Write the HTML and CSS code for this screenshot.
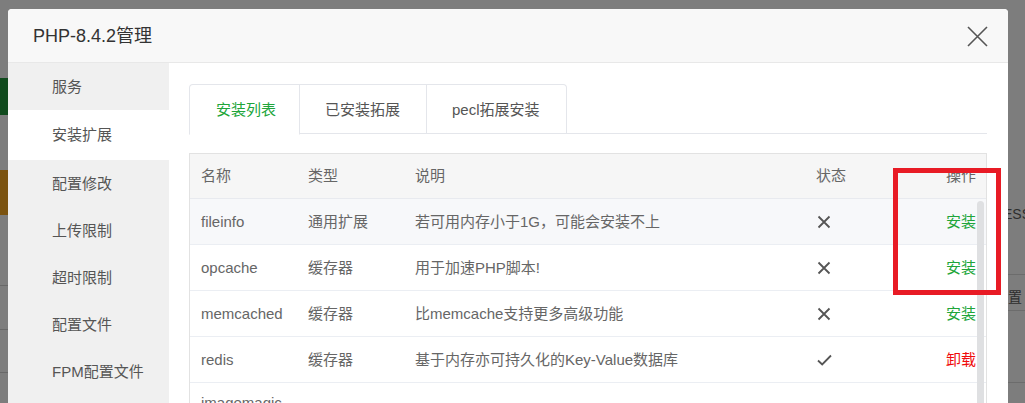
FILE: index.html
```html
<!DOCTYPE html>
<html lang="zh-CN">
<head>
<meta charset="utf-8">
<title>PHP-8.4.2管理</title>
<link rel="stylesheet" href="styles.css">
</head>
<body>
<div class="backdrop">
  <div class="bg-green"></div>
  <div class="bg-brown"></div>
  <div class="bg-line l1"></div>
  <div class="bg-line l2"></div>
  <div class="bg-line l3"></div>
  <div class="bg-rline r1"></div>
  <div class="bg-rline r2"></div>
  <div class="bg-rline r3"></div>
  <div class="bg-text t1">ESS</div>
  <div class="bg-text t2">置</div>
</div>
<div class="modal">
  <div class="modal-header">
    <span class="modal-title">PHP-8.4.2管理</span>
    <span class="modal-close">
      <svg width="21" height="21" viewBox="0 0 21 21"><path d="M1 1 L20 20 M20 1 L1 20" stroke="#555" stroke-width="1.6" fill="none"/></svg>
    </span>
  </div>
  <div class="modal-body">
    <ul class="side">
      <li>服务</li>
      <li class="active">安装扩展</li>
      <li>配置修改</li>
      <li>上传限制</li>
      <li>超时限制</li>
      <li>配置文件</li>
      <li>FPM配置文件</li>
    </ul>
    <div class="content">
      <div class="tabs">
        <div class="tab active">安装列表</div>
        <div class="tab">已安装拓展</div>
        <div class="tab">pecl拓展安装</div>
      </div>
      <div class="table">
        <div class="row head">
          <div class="cell">名称</div>
          <div class="cell">类型</div>
          <div class="cell">说明</div>
          <div class="cell">状态</div>
          <div class="cell op">操作</div>
        </div>
        <div class="tbody">
          <div class="row hover">
            <div class="cell name">fileinfo</div>
            <div class="cell">通用扩展</div>
            <div class="cell">若可用内存小于1G，可能会安装不上</div>
            <div class="cell"><svg class="st" width="14" height="14" viewBox="0 0 14 14"><path d="M1.5 1.5 L12.5 12.5 M12.5 1.5 L1.5 12.5" stroke="#555" stroke-width="1.8"/></svg></div>
            <div class="cell op"><span class="install">安装</span></div>
          </div>
          <div class="row">
            <div class="cell name">opcache</div>
            <div class="cell">缓存器</div>
            <div class="cell">用于加速PHP脚本!</div>
            <div class="cell"><svg class="st" width="14" height="14" viewBox="0 0 14 14"><path d="M1.5 1.5 L12.5 12.5 M12.5 1.5 L1.5 12.5" stroke="#555" stroke-width="1.8"/></svg></div>
            <div class="cell op"><span class="install">安装</span></div>
          </div>
          <div class="row">
            <div class="cell name">memcached</div>
            <div class="cell">缓存器</div>
            <div class="cell">比memcache支持更多高级功能</div>
            <div class="cell"><svg class="st" width="14" height="14" viewBox="0 0 14 14"><path d="M1.5 1.5 L12.5 12.5 M12.5 1.5 L1.5 12.5" stroke="#555" stroke-width="1.8"/></svg></div>
            <div class="cell op"><span class="install">安装</span></div>
          </div>
          <div class="row">
            <div class="cell name">redis</div>
            <div class="cell">缓存器</div>
            <div class="cell">基于内存亦可持久化的Key-Value数据库</div>
            <div class="cell"><svg class="st" width="15" height="12" viewBox="0 0 15 12"><path d="M1 6.5 L5.2 10.5 L14 1.5" stroke="#555" stroke-width="1.8" fill="none"/></svg></div>
            <div class="cell op"><span class="uninstall">卸载</span></div>
          </div>
          <div class="row wrap">
            <div class="cell name">imagemagick</div>
            <div class="cell"></div>
            <div class="cell"></div>
            <div class="cell"></div>
            <div class="cell op"></div>
          </div>
          <div class="scroll-thumb"></div>
        </div>
      </div>
    </div>
  </div>
  <div class="mark"></div>
</div>
</body>
</html>
```

FILE: styles.css
```css
* { box-sizing: border-box; }
html, body { margin: 0; padding: 0; }
body {
  width: 1025px;
  height: 403px;
  overflow: hidden;
  background: #7d7d7d;
  font-family: "Liberation Sans", "Noto Sans CJK SC", sans-serif;
  position: relative;
}
.backdrop { position: absolute; inset: 0; }
.bg-green { position: absolute; left: 0; top: 78px; width: 8px; height: 37px; background: #104a1d; }
.bg-brown { position: absolute; left: 0; top: 170px; width: 8px; height: 45px; background: #7b5310; }
.bg-line { position: absolute; left: 0; width: 8px; height: 1px; background: #686868; }
.l1 { top: 285px; } .l2 { top: 329px; } .l3 { top: 372px; }
.bg-rline { position: absolute; right: 0; width: 17px; height: 1px; background: #6c6c6c; }
.r1 { top: 274px; } .r2 { top: 310px; } .r3 { top: 382px; }
.bg-text { position: absolute; left: 1003px; color: #2e2e2e; font-size: 14px; line-height: 16px; }
.t1 { top: 206px; } .t2 { top: 289px; left: 1008px; }

.modal {
  position: absolute;
  left: 8px;
  top: 9px;
  width: 1000px;
  height: 420px;
  background: #fff;
  border-radius: 4px 4px 0 0;
  overflow: hidden;
}
.modal-header {
  height: 54px;
  background: #f8f8f8;
  border-bottom: 1px solid #e8e8e8;
  display: flex;
  align-items: center;
  justify-content: space-between;
  padding: 0 20px 0 25px;
}
.modal-title { font-size: 18px; color: #333; line-height: 24px; }
.modal-close { display: flex; width: 21px; height: 21px; margin-top: 1px; }
.modal-body { display: flex; height: 366px; }
.side {
  list-style: none;
  margin: 0;
  padding: 0;
  width: 161px;
  background: #f0f0f0;
  flex: none;
}
.side li {
  height: 47px;
  line-height: 47px;
  padding-left: 44px;
  font-size: 15px;
  color: #555;
}
.side li.active { background: #fff; height: 50px; line-height: 50px; }
.content { flex: 1; padding: 21px 21px 0 20px; }
.tabs {
  display: flex;
  height: 50px;
  border-bottom: 1px solid #e4e6eb;
}
.tab {
  height: 50px;
  line-height: 49px;
  font-size: 15px;
  color: #555;
  padding: 0 26px 0 25px;
  border: 1px solid #e4e6eb;
  border-left: none;
  background: #fff;
}
.tab:first-child { border-left: 1px solid #e4e6eb; border-top-left-radius: 4px; padding: 0 23px 0 26px; }
.tab:last-child { border-top-right-radius: 4px; padding: 0 26px 0 25px; }
.tab.active { color: #20a53a; border-bottom-color: #fff; margin-bottom: -1px; height: 51px; }

.table {
  margin-top: 19px;
  border: 1px solid #e2e2e2;
  border-bottom: none;
}
.row {
  display: grid;
  grid-template-columns: 107px 107px 401px 80px 1fr;
  min-height: 46px;
  border-bottom: 1px solid #ebeef3;
  align-items: center;
  font-size: 15px;
  color: #666;
}
.row.head { min-height: 45px; height: 45px; background: #f6f6f6; border-bottom-color: #e8eaef; }
.row.hover { background: #f7f8fa; }
.row.wrap { align-items: start; padding: 9px 0; }
.cell { padding-left: 11px; white-space: nowrap; overflow: hidden; line-height: 20px; }
.cell.name { white-space: normal; word-break: break-all; padding-right: 12px; }
.row.wrap .cell.name { line-height: 22px; }
.cell.op { text-align: right; padding-right: 10px; padding-left: 0; }
.st { display: block; margin-left: 1px; }
.install { color: #20a53a; }
.uninstall { color: #ef0b0b; }
.tbody { position: relative; }
.scroll-thumb {
  position: absolute;
  right: 2px;
  top: 2px;
  width: 7px;
  height: 300px;
  background: #dfe0e2;
  border-radius: 4px;
}
.mark {
  position: absolute;
  left: 885px;
  top: 159px;
  width: 108px;
  height: 127px;
  border: 5px solid #e81b25;
}
```
